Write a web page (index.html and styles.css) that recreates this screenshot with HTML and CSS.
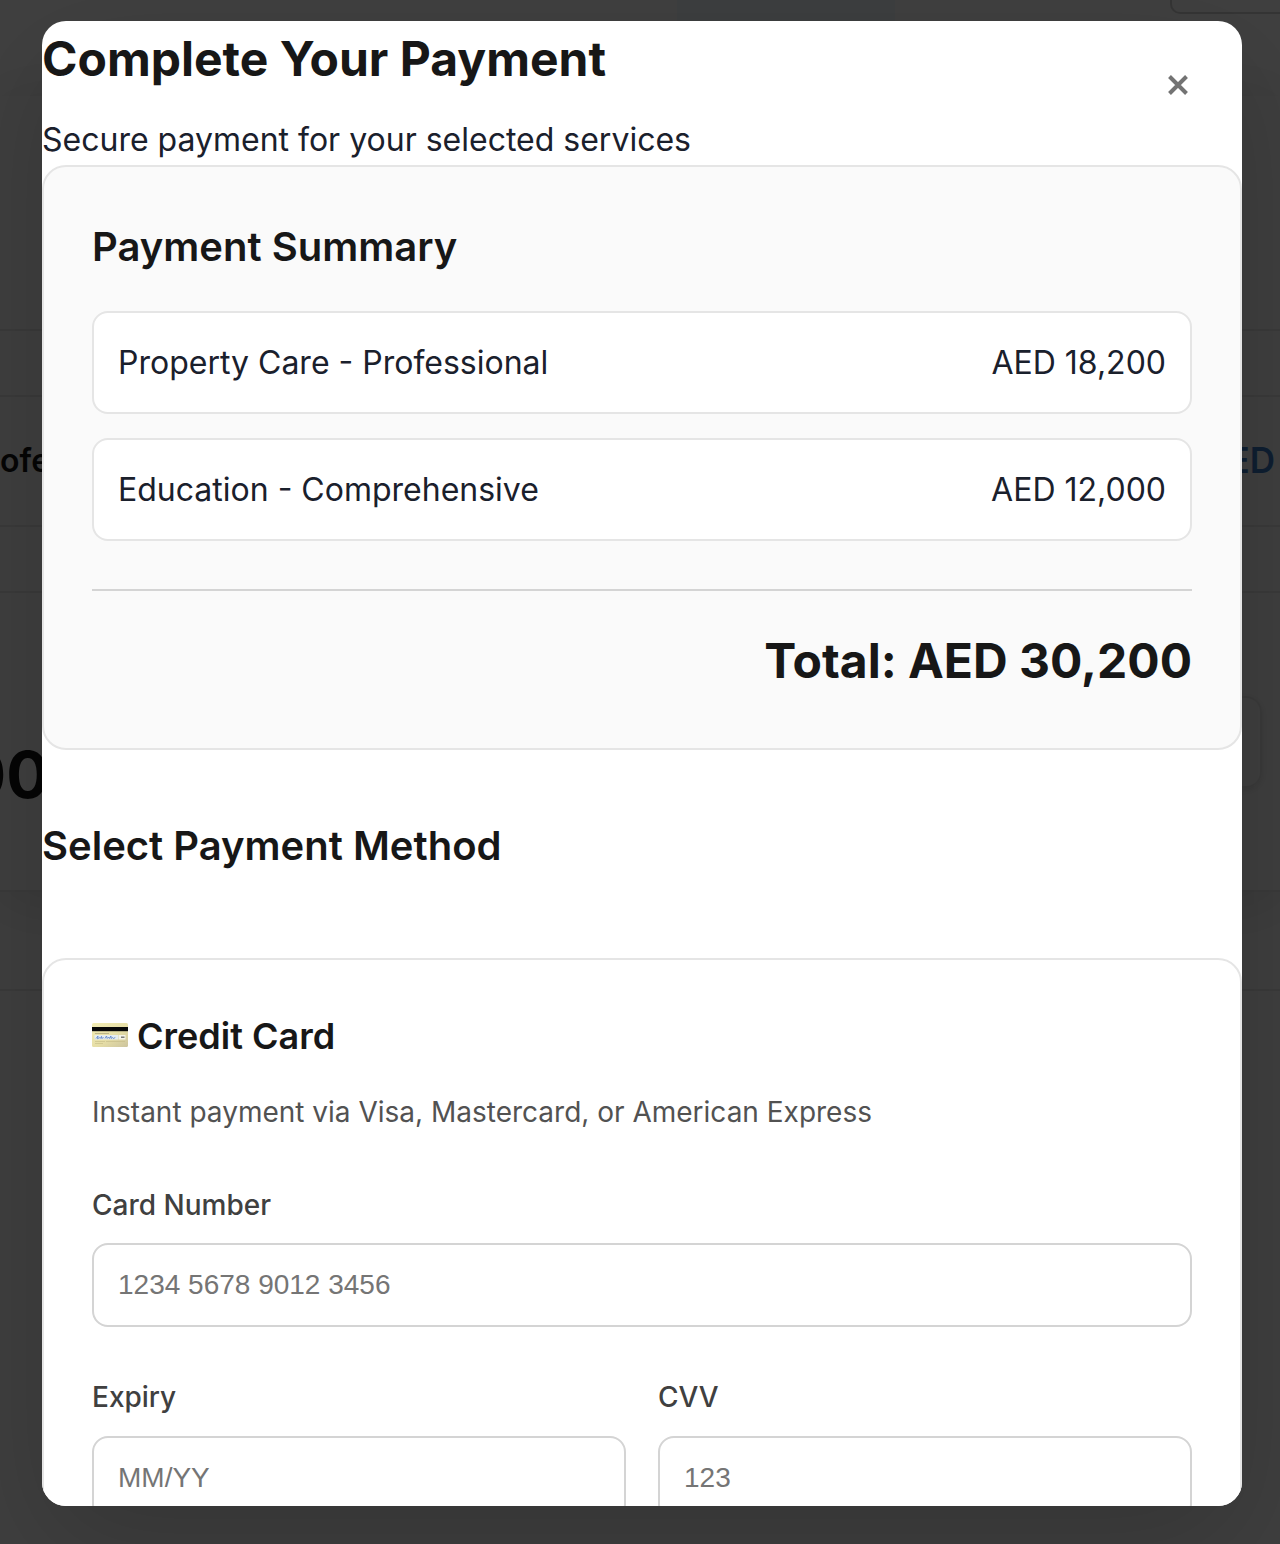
FILE: index.html
```html
<!DOCTYPE html>
<html lang="en">
<head>
<meta charset="utf-8">
<title>Complete Your Payment</title>
<link rel="stylesheet" href="styles.css">
</head>
<body>
<div class="page" aria-hidden="true">
  <div class="page-top"><div class="banner"></div><div class="top-box"></div></div>
  <div class="sheet">
    <div class="row row-head"></div>
    <div class="row row-gap"></div>
    <div class="row row-item"><span class="item-name">ofe</span><span class="item-price">ED</span></div>
    <div class="row row-gap"></div>
    <div class="row-total"><span class="big">00</span><span class="ghost-button"></span></div>
  </div>
  <div class="page-foot"></div>
</div>
<div class="overlay">
  <div class="modal" role="dialog" aria-modal="true">
    <header class="modal-header">
      <div>
        <h2 class="title">Complete Your Payment</h2>
        <p class="subtitle">Secure payment for your selected services</p>
      </div>
      <button class="close" aria-label="Close"><svg viewBox="0 0 22 22" aria-hidden="true"><path d="M2.500 2.500l17 17M19.500 2.500l-17 17"/></svg></button>
    </header>
    <section class="summary">
      <h3 class="heading">Payment Summary</h3>
      <div class="items">
        <div class="item"><span>Property Care - Professional</span><span>AED 18,200</span></div>
        <div class="item"><span>Education - Comprehensive</span><span>AED 12,000</span></div>
      </div>
      <div class="total">Total: AED 30,200</div>
    </section>
    <h3 class="heading method-heading">Select Payment Method</h3>
    <section class="card">
      <h4 class="card-title">
        <svg class="card-icon" viewBox="0 0 36 24" aria-hidden="true">
          <defs><linearGradient id="gold" x1="0" y1="0" x2="1" y2="1"><stop offset="0" stop-color="#f2ecb4"/><stop offset=".55" stop-color="#e6dea6"/><stop offset="1" stop-color="#cdc49e"/></linearGradient></defs>
          <rect width="36" height="24" rx="1.5" fill="url(#gold)"/>
          <rect y="4" width="36" height="4.200" fill="#080808"/>
          <path d="M3 10.500h14" stroke="#a8a078" stroke-width=".7"/>
          <rect x="2.500" y="12" width="24" height="4.500" fill="#e5edf0"/>
          <rect x="27" y="12" width="6.500" height="4.500" fill="#f5f4e8"/>
          <path d="M29 14.200h3.500" stroke="#666" stroke-width="1.300"/>
          <path d="M4 15.500l2-2.500-.5 2.700 2-1 .8.700 1.200-2 .2 2 2-.8M13 15.500l1.500-2.500.7 2.500 1.500-1.500.7 1.500 1.500-2.500.2 2.500 1.500-1 .7 1 2-1" fill="none" stroke="#6288cc" stroke-width=".9"/>
          <path d="M3 18.500h10M14 18.500h19M3 20.500h8" stroke="#c5ba86" stroke-width=".6"/>
        </svg>
        <span>Credit Card</span>
      </h4>
      <p class="card-text">Instant payment via Visa, Mastercard, or American Express</p>
      <label class="field"><span>Card Number</span><input type="text" placeholder="1234 5678 9012 3456"></label>
      <div class="field-row">
        <label class="field"><span>Expiry</span><input type="text" placeholder="MM/YY"></label>
        <label class="field"><span>CVV</span><input type="text" placeholder="123"></label>
      </div>
    </section>
  </div>
</div>
</body>
</html>
```
FILE: styles.css
```css
* { box-sizing: border-box; margin: 0; padding: 0; }
body {
  height: 1544px;
  overflow: hidden;
  font-family: Inter, sans-serif;
  font-size: 32px;
  line-height: 1.6;
  color: #1a202c;
  background: #fff;
}

/* Page behind the dialog */
.page { height: 1544px; overflow: hidden; background: #fcfcfc; }
.page-top {
  height: 96px;
  display: flex;
  justify-content: space-between;
  align-items: flex-start;
  padding-left: 677px;
  background: #fff;
}
.banner { width: 218px; height: 60px; background: #f3f9ff; }
.top-box {
  width: 110px;
  height: 14px;
  border: 2px solid #d4d4d4;
  border-width: 0 0 2px 2px;
  border-bottom-left-radius: 10px;
}
.sheet { height: 796px; background: #fafafa; border-bottom: 2px solid #e5e5e5; box-shadow: 0 8px 60px rgba(0, 0, 0, .13); }
.row { border-bottom: 2px solid #e5e5e5; }
.row-head { height: 235px; }
.row-gap { height: 66px; }
.row-item {
  height: 130px;
  display: flex;
  justify-content: space-between;
  align-items: center;
  padding-right: 5px;
  font-weight: 600;
  color: #171717;
}
.item-price { margin-bottom: 2px; font-size: 35px; color: #3a7ac4; }
.row-total {
  height: 298px;
  display: flex;
  justify-content: space-between;
  padding: 103px 18px 0 0;
}
.big { margin: 28px 0 0 -37px; font-size: 64px; font-weight: 700; color: #171717; }
.ghost-button {
  width: 140px;
  height: 92px;
  border: 2px solid #e8e8e8;
  border-radius: 16px;
  box-shadow: 0 2px 6px rgba(0, 0, 0, .1);
}
.page-foot { height: 99px; border-bottom: 2px solid #e5e5e5; }

.overlay {
  position: absolute;
  inset: 0;
  padding: 21px 38px 38px 42px;
  background: rgba(0, 0, 0, .75);
  overflow: hidden;
}
.modal {
  width: 1200px;
  height: 1485px;
  overflow: hidden;
  border-radius: 24px;
  background: #fff;
  box-shadow: 0 40px 120px rgba(0, 0, 0, .17);
}
.modal-header {
  display: flex;
  justify-content: space-between;
  align-items: flex-start;
  padding-right: 32px;
}
.title { margin-bottom: 16px; font-size: 48px; font-weight: 700; color: #171717; }
.close {
  display: flex;
  align-items: center;
  justify-content: center;
  width: 64px;
  height: 64px;
  margin-top: 32px;
  border: 0;
  background: none;
}
.close svg { width: 22px; height: 22px; stroke: #737373; stroke-width: 4; }
.summary {
  padding: 48px;
  border: 2px solid #e5e5e5;
  border-radius: 24px;
  background: #fafafa;
}
.heading { font-size: 40px; font-weight: 600; color: #171717; }
.items { display: flex; flex-direction: column; gap: 24px; margin: 32px 0 48px; }
.item {
  display: flex;
  justify-content: space-between;
  padding: 24px;
  border: 2px solid #e5e5e5;
  border-radius: 16px;
  background: #fff;
}
.total {
  padding-top: 32px;
  border-top: 2px solid #d4d4d4;
  text-align: right;
  font-size: 48px;
  font-weight: 700;
  color: #171717;
}
.method-heading { margin: 64px 0 80px; }
.card { padding: 48px; border: 2px solid #e5e5e5; border-radius: 24px; background: #fff; }
.card-title {
  display: flex;
  align-items: center;
  gap: 9px;
  margin-bottom: 24px;
  font-size: 36px;
  font-weight: 600;
  color: #171717;
}
.card-icon { width: 36px; height: 24px; margin-top: -3px; }
.card-text { margin-bottom: 48px; font-size: 28px; color: #525252; }
.field { display: block; margin-bottom: 48px; font-size: 28px; font-weight: 500; color: #404040; }
.field span { display: block; margin-bottom: 16px; }
.field input {
  display: block;
  width: 100%;
  height: 84px;
  padding: 24px;
  border: 2px solid #d4d4d4;
  border-radius: 16px;
  background: #fff;
  font: 28px "Liberation Sans", Arial, sans-serif;
}
.field input::placeholder { color: #757575; }
.field-row { display: grid; grid-template-columns: 1fr 1fr; gap: 32px; }
```
